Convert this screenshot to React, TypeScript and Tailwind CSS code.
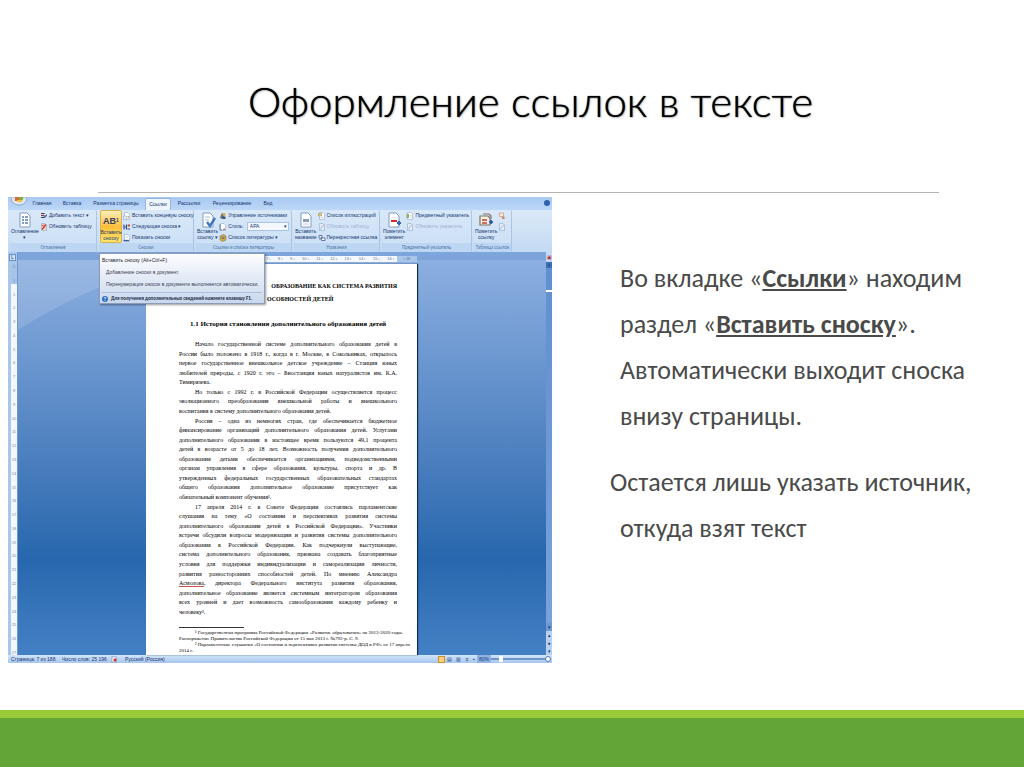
import type { ReactNode } from "react";

type IconKind =
  | "contents"
  | "addText"
  | "refresh"
  | "refreshMuted"
  | "endnote"
  | "nextNote"
  | "showNotes"
  | "citation"
  | "sources"
  | "style"
  | "bibliography"
  | "caption"
  | "figures"
  | "crossRef"
  | "markEntry"
  | "index"
  | "markCitation"
  | "authorities";

function Sheet({ tint = "#ffffff" }: { tint?: string }) {
  return <path d="M3 1h7l3 3v11H3z" fill={tint} stroke="#7f9cc4" strokeWidth="1" />;
}

const drawings: Record<IconKind, ReactNode> = {
  contents: (
    <>
      <Sheet />
      <path d="M5 5h2M8 5h3M5 8h2M8 8h3M5 11h2M8 11h3" stroke="#5f7fae" strokeWidth="1.4" />
    </>
  ),
  addText: (
    <>
      <path d="M2 3h7M2 7h4M2 11h7" stroke="#3b3f4c" strokeWidth="2" />
      <path d="M8 8l6-4v4l-5 5z" fill="#5278b5" />
      <circle cx="7" cy="7" r="2" fill="#c5402c" />
    </>
  ),
  refresh: (
    <>
      <Sheet tint="#f4d3c8" />
      <path d="M4 13l8-10" stroke="#bf3b22" strokeWidth="2.6" />
      <path d="M3 5l4-2v4z" fill="#bf3b22" />
    </>
  ),
  refreshMuted: (
    <>
      <Sheet tint="#e4edf7" />
      <path d="M4 13l8-10" stroke="#a7b7cc" strokeWidth="2" />
    </>
  ),
  endnote: (
    <>
      <Sheet />
      <path d="M1 8h6v7H1z" fill="#e8eef8" stroke="#7f9cc4" />
      <path d="M9 9h3M9 12h3" stroke="#d08a2e" strokeWidth="1.6" />
    </>
  ),
  nextNote: (
    <>
      <path d="M2 3v10M2 8h5M7 3v10" stroke="#33518c" strokeWidth="2.2" />
      <path d="M9 5h5M12 2v6" stroke="#c14b38" strokeWidth="2" />
      <path d="M9 12h5" stroke="#33518c" strokeWidth="2" />
    </>
  ),
  showNotes: (
    <>
      <Sheet />
      <path d="M1 13h11" stroke="#3b5e97" strokeWidth="2.6" />
      <path d="M5 6h5" stroke="#9db5d6" strokeWidth="1.4" />
    </>
  ),
  citation: (
    <>
      <Sheet />
      <path d="M5 5h5M5 8h4" stroke="#a8bddb" strokeWidth="1.2" />
      <path d="M7 10l3 4 5-8" fill="none" stroke="#3f74c0" strokeWidth="2.4" />
    </>
  ),
  sources: (
    <>
      <path d="M2 12l3-9h4l2 3-4 8z" fill="#5d6f8b" />
      <circle cx="10" cy="5" r="3" fill="#e0a43a" />
      <path d="M7 9h6v5H7z" fill="#3c4e70" />
    </>
  ),
  style: (
    <>
      <Sheet />
      <path d="M2 2v12h4" fill="none" stroke="#5d7fb3" strokeWidth="2" />
      <path d="M8 12l4-1v3H8z" fill="#c65e3e" />
    </>
  ),
  bibliography: (
    <>
      <path d="M2 4l7-3 5 3v8l-7 3-5-3z" fill="#d8b04a" stroke="#6d6235" />
      <path d="M5 6h6M5 9h6" stroke="#44618f" strokeWidth="1.6" />
    </>
  ),
  caption: (
    <>
      <Sheet />
      <path d="M5 7h6v3H5z" fill="#8a9dbb" />
      <path d="M5 12h6" stroke="#b9c7dc" />
    </>
  ),
  figures: (
    <>
      <Sheet />
      <path d="M1 3h6v5H1z" fill="#e5c878" stroke="#8a8a5c" />
      <path d="M6 11h5" stroke="#7f9cc4" />
    </>
  ),
  crossRef: (
    <>
      <path d="M2 3h6v5H2zM7 8h7v5H7z" fill="#ffffff" stroke="#3f5d90" strokeWidth="1.6" />
      <path d="M3 12l3-3" stroke="#3f5d90" strokeWidth="1.6" />
    </>
  ),
  markEntry: (
    <>
      <Sheet />
      <path d="M5 9h6" stroke="#cf2d22" strokeWidth="2" />
      <path d="M11 11h4M13 9v4" stroke="#2f63b0" strokeWidth="2" />
    </>
  ),
  index: (
    <>
      <Sheet />
      <path d="M1 4h5v8H1z" fill="#8fae6c" />
      <path d="M8 7h3M8 10h3" stroke="#7f9cc4" />
    </>
  ),
  markCitation: (
    <>
      <path d="M2 4h8l2 2v7H2z" fill="#f6f1e6" stroke="#7c7462" strokeWidth="1.2" />
      <path d="M5 2h6l2 2v3" fill="none" stroke="#7c7462" strokeWidth="1.2" />
      <path d="M4 8h5M4 11h5" stroke="#c24335" strokeWidth="1.6" />
      <path d="M11 10h4M13 8v4" stroke="#2f63b0" strokeWidth="2" />
    </>
  ),
  authorities: (
    <>
      <path d="M3 2h8v7H3z" fill="#f7ead9" stroke="#b27a56" />
      <path d="M8 9h5v5H8z" fill="#c98a63" />
    </>
  ),
};

function Icon({ kind, large = false }: { kind: IconKind; large?: boolean }) {
  return (
    <svg viewBox="0 0 16 16" className={large ? "size-4 shrink-0" : "size-[8px] shrink-0"} aria-hidden="true">
      {drawings[kind]}
    </svg>
  );
}

function BigButton({ icon, lines }: { icon: IconKind; lines: string[] }) {
  return (
    <button type="button" className="flex shrink-0 flex-col items-center pt-[2px]">
      <Icon kind={icon} large />
      {lines.map((line) => (
        <span key={line} className="block leading-[6px]">
          {line}
        </span>
      ))}
    </button>
  );
}

function SmallButton({
  icon,
  label,
  name,
  muted = false,
}: {
  icon: IconKind;
  label?: string;
  name?: string;
  muted?: boolean;
}) {
  return (
    <button
      type="button"
      aria-label={name}
      className={
        muted
          ? "flex h-[11px] items-center gap-[1px] whitespace-nowrap text-[#9fb3cf]"
          : "flex h-[11px] items-center gap-[1px] whitespace-nowrap"
      }
    >
      <Icon kind={icon} />
      {label}
    </button>
  );
}

function Group({ title, width, children }: { title: string; width: string; children: ReactNode }) {
  return (
    <section
      className={`${width} flex shrink-0 flex-col rounded-[2px] border-r border-[#a9c5e6] bg-gradient-to-b from-[#d9e8f8] to-[#cadff5]`}
    >
      <div className="flex h-[33px] gap-[1px] px-[1px]">{children}</div>
      <h3 className="flex-1 bg-[#bdd6f1] text-center font-['Carlito','Lato',sans-serif] leading-[8px] whitespace-nowrap text-[#4f76ad]">
        {title}
      </h3>
    </section>
  );
}

const tabs = [
  { label: "Главная", box: "w-[30px]" },
  { label: "Вставка", box: "w-[30px]" },
  { label: "Разметка страницы", box: "w-[58px]" },
  { label: "Ссылки", box: "w-[26px]" },
  { label: "Рассылки", box: "w-[36px]" },
  { label: "Рецензирование", box: "w-[50px]" },
  { label: "Вид", box: "w-[22px]" },
];

function TabBar() {
  return (
    <div className="flex h-[13px] items-end bg-gradient-to-b from-[#a9c9f2] to-[#bcd7f8] pr-[2px]">
      <svg viewBox="0 0 16 12" className="ml-[3px] h-3 w-4 self-start" aria-hidden="true">
        <path d="M0 0h16c0 5-3 8-8 8S0 5 0 0z" fill="#dfe6ee" stroke="#8ea7c8" />
        <path d="M4 0h4v4H4z" fill="#d9692f" />
        <path d="M8 0h4v3H8z" fill="#7fae3b" />
        <path d="M6 3h5v2H6z" fill="#efc13d" />
      </svg>
      {tabs.map((tab) => (
        <button
          key={tab.label}
          type="button"
          className={
            tab.label === "Ссылки"
              ? `${tab.box} h-[12px] rounded-t-[2px] border border-b-0 border-[#93b5df] bg-[#eef5fd] text-center whitespace-nowrap`
              : `${tab.box} h-[12px] text-center whitespace-nowrap`
          }
        >
          {tab.label}
        </button>
      ))}
      <button type="button" aria-label="Справка" className="mb-[4px] ml-auto size-[6px] rounded-full bg-[#2e62ad]" />
    </div>
  );
}

function Ribbon() {
  return (
    <div className="flex h-[42px] gap-[2px] bg-gradient-to-b from-[#dbe9f8] to-[#c3daf3] pl-[2px]">
      <Group title="Оглавление" width="w-[87px]">
        <BigButton icon="contents" lines={["Оглавление", "▾"]} />
        <div>
          <SmallButton icon="addText" label="Добавить текст ▾" />
          <SmallButton icon="refresh" label="Обновить таблицу" />
        </div>
      </Group>
      <Group title="Сноски" width="w-[95px]">
        <button
          type="button"
          className="flex w-[22px] shrink-0 flex-col items-center rounded-[2px] border border-[#d8b04c] bg-gradient-to-b from-[#fdeeb4] via-[#fbbf3c] to-[#fee56b]"
        >
          <span className="pt-[3px] text-[9px] leading-[15px] font-bold text-[#33415f]">
            AB<sup className="text-[5px]">1</sup>
          </span>
          <span className="block leading-[6px]">Вставить</span>
          <span className="block leading-[6px]">сноску</span>
        </button>
        <div>
          <SmallButton icon="endnote" label="Вставить концевую сноску" />
          <SmallButton icon="nextNote" label="Следующая сноска ▾" />
          <SmallButton icon="showNotes" label="Показать сноски" />
        </div>
      </Group>
      <Group title="Ссылки и списки литературы" width="w-[96px]">
        <BigButton icon="citation" lines={["Вставить", "ссылку ▾"]} />
        <div>
          <SmallButton icon="sources" label="Управление источниками" />
          <label className="flex h-[11px] items-center gap-[1px]">
            <Icon kind="style" />
            Стиль:
            <span className="relative ml-[2px] flex items-center">
              <select
                defaultValue="APA"
                className="h-[9px] w-[42px] appearance-none border border-[#a9c3e3] bg-[#f4f8fd] px-[2px] leading-[7px]"
              >
                <option>APA</option>
              </select>
              <span className="pointer-events-none absolute right-[2px]" aria-hidden="true">
                ▾
              </span>
            </span>
          </label>
          <SmallButton icon="bibliography" label="Список литературы ▾" />
        </div>
      </Group>
      <Group title="Названия" width="w-[86px]">
        <BigButton icon="caption" lines={["Вставить", "название"]} />
        <div>
          <SmallButton icon="figures" label="Список иллюстраций" />
          <SmallButton icon="refreshMuted" label="Обновить таблицу" muted />
          <SmallButton icon="crossRef" label="Перекрестная ссылка" />
        </div>
      </Group>
      <Group title="Предметный указатель" width="w-[90px]">
        <BigButton icon="markEntry" lines={["Пометить", "элемент"]} />
        <div>
          <SmallButton icon="index" label="Предметный указатель" />
          <SmallButton icon="refreshMuted" label="Обновить указатель" muted />
        </div>
      </Group>
      <Group title="Таблица ссылок" width="w-[38px]">
        <BigButton icon="markCitation" lines={["Пометить", "ссылку"]} />
        <div>
          <SmallButton icon="authorities" name="Список таблиц" />
          <SmallButton icon="refreshMuted" name="Обновить" muted />
        </div>
      </Group>
    </div>
  );
}

function Tooltip() {
  return (
    <div
      role="tooltip"
      className="absolute top-[1px] left-[91px] h-[51px] w-[166px] border border-[#8c9cb8] bg-gradient-to-b from-[#fdfdff] to-[#c9d8ee] px-[2px] text-[#3d4150] shadow-[1px_1px_2px_#00000066]"
    >
      <p className="mt-[2px] leading-[8px] text-[#22252e]">Вставить сноску (Alt+Ctrl+F)</p>
      <p className="mt-[4px] pl-[4px] leading-[8px]">Добавление сноски в документ.</p>
      <p className="mt-[4px] pl-[4px] leading-[8px] whitespace-nowrap">
        Перенумерация сносок в документе выполняется автоматически.
      </p>
      <p className="mt-[4px] flex items-center gap-[3px] border-t border-[#aebfd9] pt-[1px] font-['Carlito','Lato',sans-serif] leading-[9px] font-bold whitespace-nowrap text-[#1e2a44]">
        <span className="flex size-[6px] items-center justify-center rounded-full bg-[#2f6fc4] leading-[6px] text-white">?</span>
        Для получения дополнительных сведений нажмите клавишу F1.
      </p>
    </div>
  );
}

type Line = { text: ReactNode; kind?: "first" | "last" };

const lines: Line[] = [
  { text: "Начало государственной системе дополнительного образования детей в", kind: "first" },
  { text: "России было положено в 1918 г., когда в г. Москве, в Сокольниках, открылось" },
  { text: "первое государственное внешкольное детское учреждение – Станция юных" },
  { text: "любителей природы, с 1920 г. это – Биостанция юных натуралистов им. К.А." },
  { text: "Тимирязева.", kind: "last" },
  { text: "Но только с 1992 г. в Российской Федерации осуществляется процесс", kind: "first" },
  { text: "эволюционного преобразования внешкольной работы и внешкольного" },
  { text: "воспитания в систему дополнительного образования детей.", kind: "last" },
  { text: "Россия – одна из немногих стран, где обеспечивается бюджетное", kind: "first" },
  { text: "финансирование организаций дополнительного образования детей. Услугами" },
  { text: "дополнительного образования в настоящее время пользуются 49,1 процента" },
  { text: "детей в возрасте от 5 до 18 лет. Возможность получения дополнительного" },
  { text: "образования детьми обеспечивается организациями, подведомственными" },
  { text: "органам управления в сфере образования, культуры, спорта и др. В" },
  { text: "утвержденных федеральных государственных образовательных стандартах" },
  { text: "общего образования дополнительное образование присутствует как" },
  { text: "обязательный компонент обучения¹.", kind: "last" },
  { text: "17 апреля 2014 г. в Совете Федерации состоялись парламентские", kind: "first" },
  { text: "слушания на тему  «О состоянии и перспективах развития системы" },
  { text: "дополнительного образования детей в Российской Федерации». Участники" },
  { text: "встречи обсудили вопросы модернизации и развития системы дополнительного" },
  { text: "образования в Российской Федерации. Как подчеркнули выступающие," },
  { text: "система дополнительного образования, призвана создавать благоприятные" },
  { text: "условия для поддержки индивидуализации и самореализации личности," },
  { text: "развития разносторонних способностей детей. По мнению Александра" },
  {
    text: (
      <>
        <u className="decoration-[#d0504a]">Асмолова</u>, директора Федерального института развития образования,
      </>
    ),
  },
  { text: "дополнительное образование является системным интегратором образования" },
  { text: "всех уровней и дает возможность самообразования каждому ребенку и" },
  { text: "человеку².", kind: "last" },
];

function Page() {
  return (
    <article className="flex h-[391px] flex-col bg-white pr-[20px] pl-[33px] font-['Liberation_Serif',serif] text-[6px] whitespace-nowrap text-black shadow-[1px_0_1px_#0b2a55]">
      <h4 className="mt-[17px] text-right leading-[10px] font-bold">ОБРАЗОВАНИЕ КАК СИСТЕМА РАЗВИТИЯ</h4>
      <h4 className="mt-[3px] pl-[88px] leading-[10px] font-bold">ОСОБНОСТЕЙ ДЕТЕЙ</h4>
      <h5 className="mt-[15px] text-center text-[7px] leading-[10px] font-bold">
        1.1 История становления дополнительного образования детей
      </h5>
      <div className="mt-[11px] flex h-[277px] shrink-0 flex-col justify-between">
        {lines.map((line, i) => (
          <p
            key={i}
            className={
              line.kind === "last"
                ? "leading-[9px]"
                : line.kind === "first"
                  ? "pl-4 text-justify leading-[9px] [text-align-last:justify]"
                  : "text-justify leading-[9px] [text-align-last:justify]"
            }
          >
            {line.text}
          </p>
        ))}
      </div>
      <hr className="mt-[10px] w-[65px] border-[#333]" />
      <div className="mt-[2px] text-[5px] leading-[6px]">
        <p className="pl-4">¹ Государственная программа Российской Федерации «Развитие образования» на 2013-2020 годы.</p>
        <p>Распоряжение Правительства Российской Федерации от 15 мая 2013 г. №792-р. С. 9.</p>
        <p className="pl-4">² Парламентские слушания «О состоянии и перспективах развития системы ДОД в РФ» от 17 апреля</p>
        <p>2014 г.</p>
      </div>
    </article>
  );
}

function VerticalRuler() {
  const marks = Array.from({ length: 29 }, (_, i) => (i < 2 ? 2 - i : i - 1));
  return (
    <div className="flex w-[10px] shrink-0 flex-col items-end border-r border-[#6e98cf] bg-[#a9c6ec]">
      <span className="mt-[2px] mr-[1px] flex size-[7px] items-center justify-center border border-[#6a8fc6] bg-[#d4e4f8] text-[5px] leading-none">
        L
      </span>
      <div className="mt-[3px] flex w-[6px] flex-1 flex-col items-center justify-between bg-gradient-to-b from-[#a7c3e8] from-5% to-[#f4f8fd] to-5% text-[4px] leading-[5px] text-[#6d86ab]">
        {marks.map((mark, i) => (
          <span key={i}>{mark}</span>
        ))}
      </div>
    </div>
  );
}

function HorizontalRuler() {
  return (
    <div className="mb-[2px] flex h-[6px] bg-[#f4f8fd] pl-[120px] text-[4px] leading-[6px] text-[#5d7499]">
      <div className="flex flex-1 justify-between">
        {[7, 8, 9, 10, 11, 12, 13, 14, 15, 16].map((n) => (
          <span key={n}>{n} ı</span>
        ))}
      </div>
      <span className="ml-[3px] w-[20px] bg-[#a9c5ea] text-center">ı 18</span>
    </div>
  );
}

function Workspace() {
  return (
    <div className="relative flex h-[403px] bg-gradient-to-b from-[#8fb1e2] via-[#2767ad] via-76% to-[#4480c4]">
      <VerticalRuler />
      <div className="relative flex flex-1 justify-start">
        <svg
          viewBox="0 0 528 403"
          preserveAspectRatio="none"
          className="absolute inset-0 size-full"
          aria-hidden="true"
        >
          <path d="M0 78C60 40 110 22 170 8H0z" fill="#ffffff" opacity="0.13" />
          <path d="M0 0h528v8H0z" fill="#5f90d0" opacity="0.35" />
        </svg>
        <div className="relative ml-[128px] w-[271px] pt-[4px]">
          <HorizontalRuler />
          <Page />
        </div>
      </div>
      <div className="flex w-[6px] shrink-0 flex-col items-center bg-gradient-to-b from-[#5f8fce] to-[#7ba3da]">
        <span className="h-[10px] w-full bg-[#c7daf3] text-center text-[5px] leading-[10px] text-[#a33]">▣</span>
        <span className="h-[6px] w-full bg-[#3d6fb4] text-center text-[4px] leading-[6px]">▴</span>
        <span className="mt-[22px] h-[2px] w-full bg-white" />
        <span className="mt-auto flex w-full flex-col bg-[#b8d0f0] text-center text-[5px] leading-[8px]">
          <span className="bg-[#6f98d2]">▾</span>
          <span>▴</span>
          <span>●</span>
          <span>▾</span>
        </span>
      </div>
      <Tooltip />
    </div>
  );
}

function StatusBar() {
  return (
    <div className="flex h-2 items-center bg-gradient-to-b from-[#d3e4f8] to-[#a6c6ee] pr-[1px] pl-[3px] leading-[8px] whitespace-nowrap">
      <span className="w-[51px]">Страница: 7 из 188</span>
      <span className="w-[49px]">Число слов: 25 196</span>
      <svg viewBox="0 0 8 8" className="mr-[7px] size-[7px]" aria-hidden="true">
        <path d="M1 1h5v6H1z" fill="#ffffff" stroke="#8b9fc0" />
        <path d="M3 3l3 3M6 3L3 6" stroke="#c8342c" strokeWidth="1.4" />
      </svg>
      <span>Русский (Россия)</span>
      <div className="ml-auto flex items-center">
        <span className="size-[7px] border border-[#c98f2e] bg-[#fbd27a]" />
        <span className="flex w-[32px] justify-around text-[5px]">
          <span>▤</span>
          <span>▥</span>
          <span>≡</span>
          <span>▪</span>
        </span>
        <span className="w-[14px] bg-[#8eb2e4] text-center">80%</span>
        <input
          type="range"
          aria-label="Масштаб"
          min="10"
          max="200"
          defaultValue="40"
          className="h-[2px] w-[54px] appearance-none bg-[#6f94c8] [&::-webkit-slider-thumb]:h-[6px] [&::-webkit-slider-thumb]:w-[4px] [&::-webkit-slider-thumb]:appearance-none [&::-webkit-slider-thumb]:bg-white"
        />
        <span className="size-[6px] rounded-full border border-[#4a76b6] bg-white" />
      </div>
    </div>
  );
}

export default function App() {
  return (
    <div className="flex min-h-screen flex-col bg-white">
      <header className="mr-[85px] ml-[98px] h-[193px] border-b border-[#b3b3b3] pt-[73px] pl-6 text-center">
        <h1 className="font-['Lato',sans-serif] text-[42px] leading-[56px] font-light text-black [text-shadow:0_0_1px_#000000,1px_1px_2px_#00000040]">
          Оформление ссылок в тексте
        </h1>
      </header>
      <main className="mt-1 grid grid-cols-[552fr_472fr]">
        <figure className="pl-2 font-['Liberation_Sans',sans-serif] text-[5px] text-[#14356f]">
          <TabBar />
          <Ribbon />
          <Workspace />
          <StatusBar />
        </figure>
        <div className="pt-[58px] pl-[58px] font-['Carlito','Lato',sans-serif] text-[26px] leading-[46px] whitespace-nowrap text-[#4a4a4a]">
          <p className="pl-[10px]">
            Во вкладке «<strong className="underline">Ссылки</strong>» находим
            <br />
            раздел «<strong className="underline">Вставить сноску</strong>».
            <br />
            Автоматически выходит сноска
            <br />
            внизу страницы.
          </p>
          <p className="mt-5 pl-[10px] -indent-[10px]">
            Остается лишь указать источник,
            <br />
            откуда взят текст
          </p>
        </div>
      </main>
      <footer className="mt-auto h-[57px] border-t-8 border-[#99cb38] bg-[#63a537]" />
    </div>
  );
}
